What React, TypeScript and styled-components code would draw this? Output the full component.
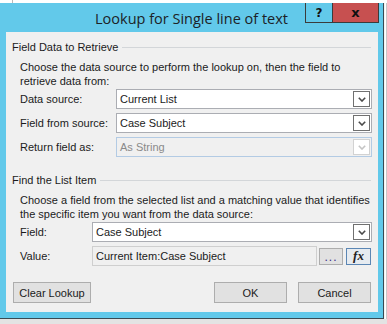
import React from 'react'
import styled, { createGlobalStyle } from 'styled-components'

const GlobalStyle = createGlobalStyle`
  html, body {
    margin: 0;
    padding: 0;
    background: #ffffff;
  }
  body {
    font-family: "Segoe UI", "Liberation Sans", sans-serif;
    font-size: 11px;
    color: #1b1b1b;
  }
`

const Screen = styled.div`
  width: 387px;
  height: 324px;
  overflow: hidden;
  display: flex;
  flex-direction: column;
  background: #ffffff linear-gradient(90deg, transparent 12px, #b9b9b9 12px, #b9b9b9 13px, transparent 13px);
`

const WindowRow = styled.div`
  display: flex;
  margin-top: 3px;
`

const Window = styled.div`
  width: 384px;
  height: 316px;
  box-sizing: border-box;
  background: #62c9ea;
  border-right: 1px solid #3a4a52;
  border-bottom: 1px solid #3a4a52;
  display: flex;
  flex-direction: column;
`

const RightGap = styled.div`
  flex: 1;
  background: linear-gradient(90deg, #f4f4f4 1px, #ffffff 1px, #ffffff 2px, #c8c8c8 2px, #c8c8c8 3px, #ffffff 3px);
`

const BottomStrip = styled.div`
  flex: 1;
  background: #e3e3e3;
`

const TitleBar = styled.div`
  height: 29px;
  display: grid;
  grid-template-columns: 1fr auto 1fr;
  align-items: center;
`

const Title = styled.div`
  grid-column: 2;
  font-family: "Open Sans", "Noto Sans", sans-serif;
  font-size: 14.5px;
  color: #1c2226;
  padding-top: 1px;
`

const Captions = styled.div`
  grid-column: 3;
  align-self: start;
  justify-self: end;
  display: flex;
  margin-right: 4px;
`

const CaptionButton = styled.div<{ $close?: boolean }>`
  width: ${(p) => (p.$close ? 47 : 28)}px;
  height: 20px;
  box-sizing: border-box;
  border: 1px solid #3b3b3b;
  border-top: none;
  margin-left: ${(p) => (p.$close ? -1 : 0)}px;
  background: ${(p) => (p.$close ? '#c75050' : '#62c9ea')};
  display: flex;
  align-items: center;
  justify-content: center;
  font-family: "DejaVu Sans", sans-serif;
  font-weight: bold;
  font-size: ${(p) => (p.$close ? 13 : 12)}px;
  color: #111;
`

const Panel = styled.div`
  margin: 0 5px 6px 6px;
  height: 280px;
  box-sizing: border-box;
  background: #f0f0f0;
  padding: 8px 6px 9px 6px;
  display: flex;
  flex-direction: column;
`

const GroupHeader = styled.div<{ $gap?: number }>`
  display: flex;
  align-items: center;
  height: 14px;
  margin-top: ${(p) => p.$gap ?? 0}px;
  margin-right: 1px;
`

const GroupLine = styled.div`
  flex: 1;
  height: 1px;
  margin-left: 4px;
  background: #d3d6d9;
`

const GroupBody = styled.div`
  padding-left: 8px;
  display: flex;
  flex-direction: column;
`

const Description = styled.div`
  margin-top: 6px;
  line-height: 14px;
  white-space: nowrap;
`

const Fields = styled.div`
  margin-top: 1px;
  display: flex;
  flex-direction: column;
  gap: 4px;
`

const FieldRow = styled.div<{ $label: number }>`
  display: grid;
  grid-template-columns: ${(p) => p.$label}px 1fr;
  align-items: center;
  height: 20px;
`

const Select = styled.div<{ $disabled?: boolean }>`
  height: 20px;
  box-sizing: border-box;
  border: 1px solid ${(p) => (p.$disabled ? '#b3cbe4' : '#abadb3')};
  background: ${(p) => (p.$disabled ? '#f0f0f0' : '#ffffff')};
  color: ${(p) => (p.$disabled ? '#8a8a8a' : '#1b1b1b')};
  display: flex;
  align-items: center;
  padding: 0 1px 0 3px;
`

const SelectText = styled.span`
  flex: 1;
`

const DropButton = styled.div<{ $disabled?: boolean }>`
  width: 17px;
  height: 16px;
  box-sizing: border-box;
  border: 1px solid ${(p) => (p.$disabled ? '#d2d2d2' : '#707070')};
  background: #ffffff;
  display: flex;
  align-items: center;
  justify-content: center;
`

const ValueRow = styled.div`
  display: flex;
  align-items: center;
  gap: 2px;
`

const ReadOnlyBox = styled.div`
  flex: 1;
  height: 20px;
  box-sizing: border-box;
  border: 1px solid #cfcfcf;
  background: #f0f0f0;
  display: flex;
  align-items: center;
  padding-left: 3px;
`

const SmallButton = styled.div<{ $focus?: boolean }>`
  width: ${(p) => (p.$focus ? 25 : 24)}px;
  height: 17px;
  box-sizing: border-box;
  border: 1px solid ${(p) => (p.$focus ? '#5b86b4' : '#adadad')};
  background: ${(p) => (p.$focus ? '#e6ebf0' : '#e1e1e1')};
  display: flex;
  align-items: center;
  justify-content: center;
  margin-left: ${(p) => (p.$focus ? 1 : 0)}px;
  margin-right: ${(p) => (p.$focus ? 1 : 0)}px;
`

const Dots = styled.span`
  color: #3b2c86;
  font-size: 12px;
  letter-spacing: 1px;
  margin-top: 2px;
`

const Fx = styled.span`
  font-family: "Liberation Serif", serif;
  font-style: italic;
  font-weight: bold;
  font-size: 13px;
  color: #222;
`

const ButtonBar = styled.div`
  margin-top: 16px;
  padding: 0 1px;
  display: flex;
  align-items: center;
  gap: 11px;
`

const DialogButton = styled.div<{ $width: number }>`
  width: ${(p) => p.$width}px;
  height: 21px;
  box-sizing: border-box;
  border: 1px solid #adadad;
  background: #e1e1e1;
  display: flex;
  align-items: center;
  justify-content: center;
`

const Spacer = styled.div`
  flex: 1;
`

const Chevron = ({ disabled }: { disabled?: boolean }) => (
  <svg width="8" height="5" viewBox="0 0 8 5">
    <polyline points="0.8,0.8 4,4 7.2,0.8" fill="none" stroke={disabled ? '#c4c4c4' : '#4a4a4a'} strokeWidth="1.6" />
  </svg>
)

const Dropdown = ({ value, disabled }: { value: string, disabled?: boolean }) => (
  <Select $disabled={disabled}>
    <SelectText>{value}</SelectText>
    <DropButton $disabled={disabled}><Chevron disabled={disabled} /></DropButton>
  </Select>
)

export default function App() {
  return (
    <Screen>
      <GlobalStyle />
      <WindowRow>
        <Window>
          <TitleBar>
            <Title>Lookup for Single line of text</Title>
            <Captions>
              <CaptionButton>?</CaptionButton>
              <CaptionButton $close>x</CaptionButton>
            </Captions>
          </TitleBar>
          <Panel>
            <GroupHeader>
              Field Data to Retrieve
              <GroupLine />
            </GroupHeader>
            <GroupBody>
              <Description>
                Choose the data source to perform the lookup on, then the field to<br />
                retrieve data from:
              </Description>
              <Fields>
                <FieldRow $label={96}>
                  <span>Data source:</span>
                  <Dropdown value="Current List" />
                </FieldRow>
                <FieldRow $label={96}>
                  <span>Field from source:</span>
                  <Dropdown value="Case Subject" />
                </FieldRow>
                <FieldRow $label={96}>
                  <span>Return field as:</span>
                  <Dropdown value="As String" disabled />
                </FieldRow>
              </Fields>
            </GroupBody>

            <GroupHeader $gap={16}>
              Find the List Item
              <GroupLine />
            </GroupHeader>
            <GroupBody>
              <Description>
                Choose a field from the selected list and a matching value that identifies<br />
                the specific item you want from the data source:
              </Description>
              <Fields>
                <FieldRow $label={72}>
                  <span>Field:</span>
                  <Dropdown value="Case Subject" />
                </FieldRow>
                <FieldRow $label={72}>
                  <span>Value:</span>
                  <ValueRow>
                    <ReadOnlyBox>Current Item:Case Subject</ReadOnlyBox>
                    <SmallButton><Dots>...</Dots></SmallButton>
                    <SmallButton $focus><Fx>fx</Fx></SmallButton>
                  </ValueRow>
                </FieldRow>
              </Fields>
            </GroupBody>

            <ButtonBar>
              <DialogButton $width={78}>Clear Lookup</DialogButton>
              <Spacer />
              <DialogButton $width={73}>OK</DialogButton>
              <DialogButton $width={73}>Cancel</DialogButton>
            </ButtonBar>
          </Panel>
        </Window>
        <RightGap />
      </WindowRow>
      <BottomStrip />
    </Screen>
  )
}
